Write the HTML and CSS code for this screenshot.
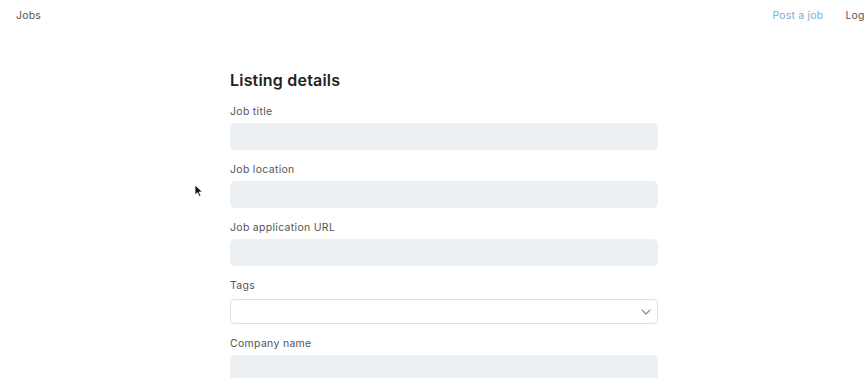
FILE: index.html
```html
<!DOCTYPE html>
<html lang="en">
<head>
    <meta charset="UTF-8">
    <meta name="viewport" content="width=device-width, initial-scale=1.0">
    <title>Post a job</title>
    <link rel="stylesheet" href="styles.css">
</head>
<body>
    <div class="page">
        <header class="topbar">
            <a class="brand" href="#">Jobs</a>
            <nav class="nav">
                <a class="nav-post" href="#">Post a job</a>
                <a class="nav-login" href="#">Log in</a>
            </nav>
        </header>

        <main class="listing">
            <h1>Listing details</h1>

            <div class="field">
                <label for="title">Job title</label>
                <input type="text" id="title" name="title">
            </div>

            <div class="field">
                <label for="location">Job location</label>
                <input type="text" id="location" name="location">
            </div>

            <div class="field">
                <label for="url">Job application URL</label>
                <input type="text" id="url" name="url">
            </div>

            <div class="field">
                <label for="tags">Tags</label>
                <div class="select-wrap">
                    <select id="tags" name="tags"></select>
                    <!-- Pfeil vom Auswahlfeld -->
                    <svg class="chevron" width="10" height="6" viewBox="0 0 10 6">
                        <path d="M1 1l4 4 4-4" fill="none" stroke="#888" stroke-width="1.1" stroke-linecap="round" stroke-linejoin="round"/>
                    </svg>
                </div>
            </div>

            <div class="field">
                <label for="company">Company name</label>
                <input type="text" id="company" name="company">
            </div>
        </main>

        <svg class="pointer" width="9" height="13" viewBox="0 0 9 13">
            <path d="M1 1v10l2.5-2.3 1.8 3.8 1.6-.8-1.8-3.7H8.4z" fill="#111" stroke="#fff" stroke-width="0.8"/>
        </svg>
    </div>
</body>
</html>
```

FILE: styles.css
```css
body {
    font-family: Inter, "Liberation Sans", Arial, sans-serif;
    background-color: #fff;
    color: #222;
    margin: 0;
    overflow: hidden;
}

.page {
    position: relative;
    width: 888px;
}

.topbar {
    display: flex;
    justify-content: space-between;
    align-items: center;
    height: 30px;
    padding: 0 11px 0 16px;
    font-size: 10.5px;
    letter-spacing: 0.2px;
}

.topbar a {
    text-decoration: none;
}

.brand {
    color: #555;
}

.nav {
    display: flex;
    gap: 22px;
}

.nav-post {
    color: #76acd9;
}

.nav-login {
    color: #555;
}

.listing {
    width: 428px;
    margin: 40px auto 0;
}

h1 {
    font-size: 16px;
    font-weight: 600;
    letter-spacing: 0.2px;
    line-height: 20px;
    margin: 0 0 15px;
    color: #222;
}

.field {
    margin-bottom: 13px;
}

label {
    display: block;
    font-size: 10.5px;
    letter-spacing: 0.3px;
    line-height: 14px;
    color: #555;
    margin-bottom: 4px;
}

input {
    display: block;
    width: 100%;
    height: 27px;
    box-sizing: border-box;
    border: none;
    border-radius: 5px;
    background-color: #edf0f3;
}

.select-wrap {
    position: relative;
}

select {
    display: block;
    width: 100%;
    height: 25px;
    margin-top: 6px;
    box-sizing: border-box;
    border: 1px solid #dcdfe3;
    border-radius: 4px;
    background-color: #fff;
    appearance: none;
    -webkit-appearance: none;
}

.chevron {
    position: absolute;
    right: 7px;
    top: 10px;
}

.pointer {
    position: absolute;
    left: 194px;
    top: 184px;
}
```
